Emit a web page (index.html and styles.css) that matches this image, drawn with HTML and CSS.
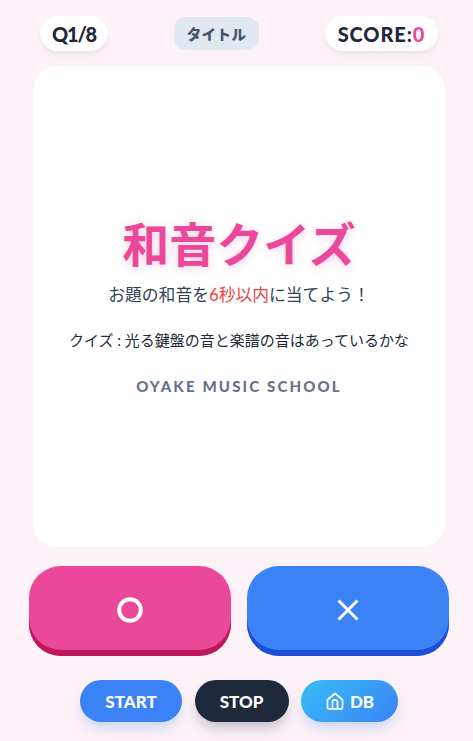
FILE: index.html
```html
<!DOCTYPE html>
<html lang="ja">
<head>
<meta charset="utf-8">
<title>和音クイズ</title>
<link rel="stylesheet" href="styles.css">
</head>
<body>
<div class="app">
  <header class="top">
    <div class="pill pill-q">Q1/8</div>
    <div class="title-pill">タイトル</div>
    <div class="pill pill-score">SCORE:<span class="score">0</span></div>
  </header>
  <main class="card">
    <h1 class="heading">和音クイズ</h1>
    <p class="lead">お題の和音を<span class="red">6秒以内</span>に当てよう！</p>
    <p class="desc">クイズ : 光る鍵盤の音と楽譜の音はあっているかな</p>
    <p class="brand">OYAKE MUSIC SCHOOL</p>
  </main>
  <div class="answers">
    <button class="answer pink" type="button">
      <svg class="mark" viewBox="0 0 26 26" width="26" height="26"><circle cx="13" cy="13" r="10.800" fill="none" stroke="#fff" stroke-width="4"/></svg>
    </button>
    <button class="answer blue" type="button">
      <svg class="mark" viewBox="0 0 24 24" width="24" height="24"><path d="M2.500 2.500 L21.500 21.500 M21.500 2.500 L2.500 21.500" fill="none" stroke="#fff" stroke-width="3"/></svg>
    </button>
  </div>
  <div class="controls">
    <button class="ctl start" type="button">START</button>
    <button class="ctl stop" type="button">STOP</button>
    <button class="ctl db" type="button">
      <svg viewBox="0 0 24 24" width="20" height="20"><path d="M3 10.500 L12 3 L21 10.500 V19.500 A2 2 0 0 1 19 21.500 H5 A2 2 0 0 1 3 19.500 Z M9 21.500 V13.500 A3 3 0 0 1 15 13.500 V21.500" fill="none" stroke="#fff" stroke-width="2" stroke-linejoin="round"/></svg>
      DB
    </button>
  </div>
</div>
</body>
</html>
```
FILE: styles.css
```css
* { box-sizing: border-box; }
html, body { margin: 0; padding: 0; height: 100%; }
body {
  background: #fdf2f8;
  font-family: "Lato", "Noto Sans CJK JP", sans-serif;
  color: #1e293b;
  overflow: hidden;
}
.app {
  width: 473px;
  height: 741px;
  display: flex;
  flex-direction: column;
}
.top {
  display: flex;
  justify-content: space-between;
  align-items: center;
  padding: 16px 35px 0 40px;
  height: 51px;
}
.pill {
  height: 35px;
  display: flex;
  align-items: center;
  justify-content: center;
  border-radius: 18px;
  background: #fff;
  font-weight: 900;
  font-size: 20px;
  color: #1e293b;
  box-shadow: 0 4px 6px -1px rgba(0,0,0,.06), 0 2px 4px -2px rgba(0,0,0,.05);
}
.pill-q { width: 68px; letter-spacing: -1.200px; }
.pill-score { width: 113px; letter-spacing: .9px; }
.score { color: #ec4899; }
.title-pill {
  width: 85px;
  height: 33px;
  display: flex;
  align-items: center;
  justify-content: center;
  border-radius: 12px;
  background: #e2e8f0;
  color: #475569;
  font-weight: 900;
  font-size: 14.500px;
  letter-spacing: .4px;
}
.card {
  margin: 15px 28px 0 33px;
  height: 481px;
  background: #fff;
  border-radius: 24px;
  display: flex;
  flex-direction: column;
  align-items: center;
  justify-content: center;
  padding-bottom: 2px;
}
.heading {
  margin: 0;
  font-size: 47px;
  line-height: 56px;
  font-weight: 700;
  color: #ec4899;
  text-shadow: 0 2px 10px rgba(236,72,153,.25);
}
.lead {
  margin: 11px 0 0;
  font-size: 16.800px;
  line-height: 24px;
  color: #334155;
}
.red { color: #ef4444; }
.desc {
  margin: 23px 0 0;
  font-size: 15px;
  line-height: 20px;
  color: #1e293b;
}
.brand {
  margin: 26px 0 0;
  font-size: 15px;
  line-height: 20px;
  font-weight: 900;
  letter-spacing: 2.150px;
  color: #64748b;
}
.answers {
  display: flex;
  gap: 16px;
  padding: 19px 24px 0 29px;
}
.answer {
  flex: 1;
  height: 90px;
  border: 0;
  border-radius: 32px;
  padding: 0 0 3px;
  display: flex;
  align-items: center;
  justify-content: center;
}
.pink { background: #ec4899; box-shadow: inset 0 -6px 0 #be185d; }
.blue { background: #3b82f6; box-shadow: inset 0 -6px 0 #1d4ed8; }
.controls {
  display: flex;
  justify-content: center;
  gap: 12.500px;
  margin-top: 24px;
  padding-left: 5px;
}
.ctl {
  height: 42px;
  border: 0;
  border-radius: 21px;
  padding: 0;
  color: #fff;
  font-family: inherit;
  font-weight: 900;
  font-size: 17px;
  display: flex;
  align-items: center;
  justify-content: center;
  gap: 5px;
}
.start { width: 102px; background: #3b82f6; box-shadow: 0 8px 14px -3px rgba(59,130,246,.28); }
.stop { width: 94px; background: #1e293b; box-shadow: 0 8px 14px -3px rgba(30,41,59,.28); }
.db { width: 97px; background: linear-gradient(135deg, #38bdf8, #3b82f6); box-shadow: 0 8px 14px -3px rgba(59,130,246,.28); }
```
